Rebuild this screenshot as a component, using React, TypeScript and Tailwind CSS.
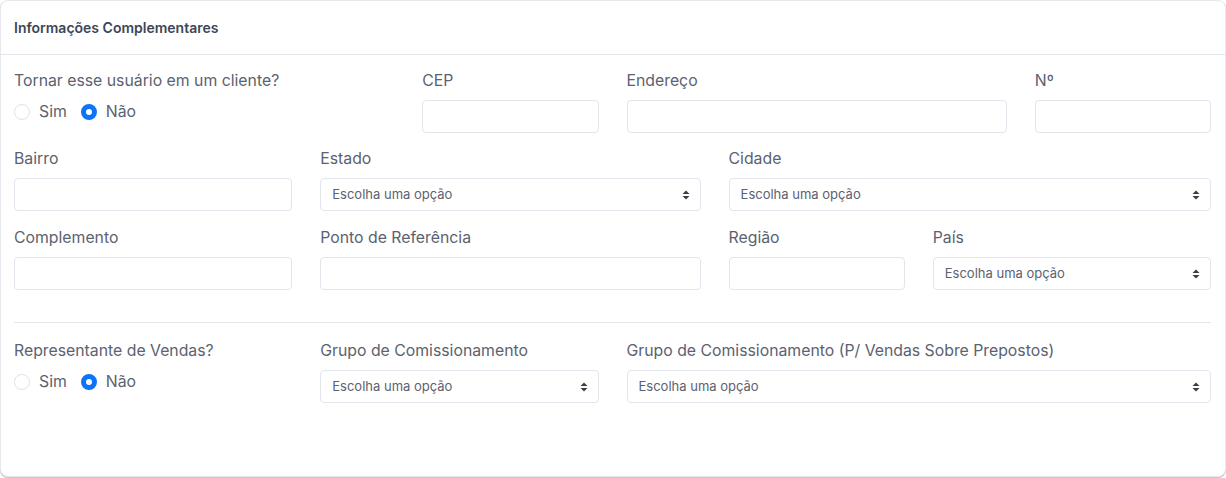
import React from "react";

const font = { fontFamily: "Inter, 'Open Sans', sans-serif" };

function Label({ children }: { children: React.ReactNode }) {
  return (
    <div className="h-[22px] leading-[22px] text-[15.8px] text-[#5b6270] mb-[8px] whitespace-nowrap">
      {children}
    </div>
  );
}

function Input() {
  return <div className="h-[33px] rounded-[4px] border border-[#e2e5ec] bg-white" />;
}

function Arrows() {
  return (
    <svg width="8" height="10" viewBox="0 0 8 10" className="shrink-0">
      <path d="M4 0.5 L7.5 4 L0.5 4 Z" fill="#3a3f47" />
      <path d="M4 9.5 L7.5 6 L0.5 6 Z" fill="#3a3f47" />
    </svg>
  );
}

function Select() {
  return (
    <div className="h-[33px] rounded-[4px] border border-[#e2e5ec] bg-white flex items-center justify-between pl-[11px] pr-[10px]">
      <span className="text-[13px] text-[#5b6270]">Escolha uma opção</span>
      <Arrows />
    </div>
  );
}

function Radios() {
  return (
    <div className="flex items-center h-[24px] text-[15.8px] text-[#5b6270]">
      <span className="w-[16px] h-[16px] rounded-full border border-[#dfe3e8] bg-white" />
      <span className="ml-[9px]">Sim</span>
      <span className="ml-[14px] w-[16px] h-[16px] rounded-full border-[5px] border-[#0d74f7] bg-white" />
      <span className="ml-[9px]">Não</span>
    </div>
  );
}

function Field({ span, label, select }: { span: string; label: string; select?: boolean }) {
  return (
    <div className={span}>
      <Label>{label}</Label>
      {select ? <Select /> : <Input />}
    </div>
  );
}

export default function App() {
  return (
    <div className="w-[1226px] h-[478px] bg-white" style={font}>
      <div className="h-[477px] rounded-[8px] border border-[#e6e8ec] shadow-[0_1px_1px_rgba(0,0,0,0.25)] bg-white">
        <div className="h-[54px] border-b border-[#e2e5ea] flex items-center px-[13px]">
          <span className="text-[14px] font-semibold text-[#3d4655]">Informações Complementares</span>
        </div>
        <div className="pl-[13px] pr-[14px] pt-[15px]">
          <div className="grid grid-cols-12 gap-x-[28px]">
            <div className="col-span-4">
              <Label>Tornar esse usuário em um cliente?</Label>
              <Radios />
            </div>
            <Field span="col-span-2" label="CEP" />
            <Field span="col-span-4" label="Endereço" />
            <Field span="col-span-2" label="Nº" />
          </div>
          <div className="grid grid-cols-12 gap-x-[28px] mt-[15px]">
            <Field span="col-span-3" label="Bairro" />
            <Field span="col-span-4" label="Estado" select />
            <Field span="col-span-5" label="Cidade" select />
          </div>
          <div className="grid grid-cols-12 gap-x-[28px] mt-[16px]">
            <Field span="col-span-3" label="Complemento" />
            <Field span="col-span-4" label="Ponto de Referência" />
            <Field span="col-span-2" label="Região" />
            <Field span="col-span-3" label="País" select />
          </div>
          <div className="border-t border-[#e2e5ea] mt-[32px]" />
          <div className="grid grid-cols-12 gap-x-[28px] mt-[17px]">
            <div className="col-span-3">
              <Label>Representante de Vendas?</Label>
              <Radios />
            </div>
            <Field span="col-span-3" label="Grupo de Comissionamento" select />
            <Field span="col-span-6" label="Grupo de Comissionamento (P/ Vendas Sobre Prepostos)" select />
          </div>
        </div>
      </div>
    </div>
  );
}
